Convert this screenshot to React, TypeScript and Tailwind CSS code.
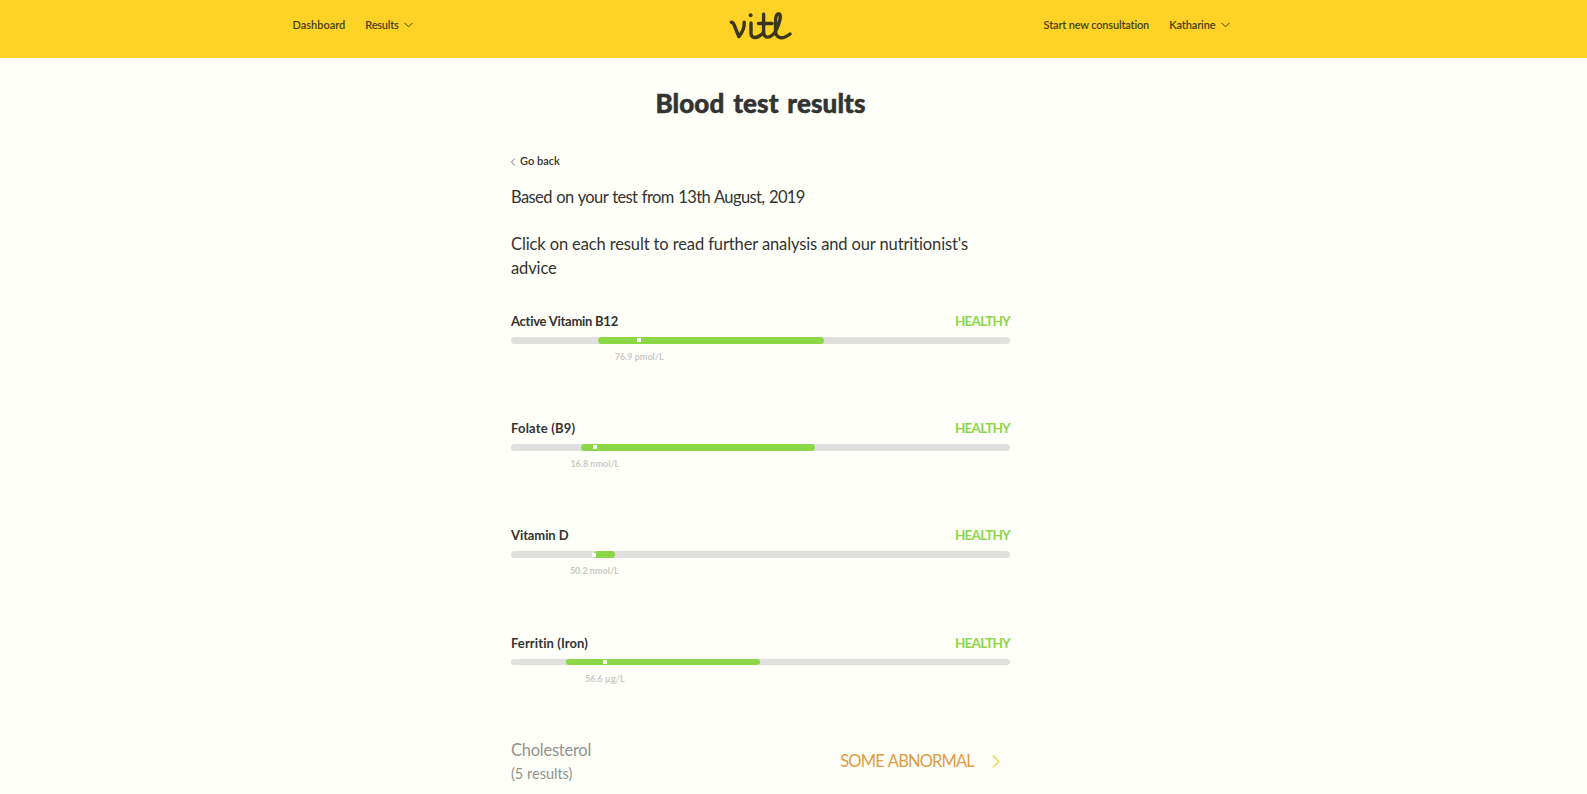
import React from 'react';

const results = [
  { name: 'Active Vitamin B12', tracking: 'tracking-[-0.26px]', status: 'HEALTHY', value: '76.9 pmol/L', from: 17.4, to: 62.7, marker: 25.7 },
  { name: 'Folate (B9)', tracking: 'tracking-[0.2px]', status: 'HEALTHY', value: '16.8 nmol/L', from: 14, to: 60.9, marker: 16.8 },
  { name: 'Vitamin D', tracking: 'tracking-[-0.1px]', status: 'HEALTHY', value: '50.2 nmol/L', from: 16.6, to: 20.8, marker: 16.7 },
  { name: 'Ferritin (Iron)', tracking: 'tracking-[0.1px]', status: 'HEALTHY', value: '56.6 µg/L', from: 11, to: 49.9, marker: 18.8 },
];

function Chevron({ className, d, box }: { className: string; d: string; box: string }) {
  return (
    <svg className={className} viewBox={box} fill="none" stroke="currentColor">
      <path d={d} />
    </svg>
  );
}

function Logo() {
  return (
    <svg className="h-[30px] w-[64px] text-[#3a371c]" viewBox="0 0 64 30" fill="none" stroke="currentColor" strokeWidth="3.4" strokeLinecap="round" strokeLinejoin="round">
      <path d="M2.3 11.3C4 11.3 4.6 12.5 5.4 14.5L9.8 25.6C12.8 22 15.6 17 15.2 11.3" />
      <path d="M22 12V22.5C22 28 28.5 28 34.5 21.5" />
      <path d="M34.6 3.3V21C34.6 28.5 42.5 27.5 47 19.5C51 12 52.8 2.8 49.5 2.8C46.8 2.8 46.5 8 46.5 12V19.5C46.5 28 54 28.8 61 23" />
      <path d="M29.5 12.5H43" />
      <circle cx="21.6" cy="4.2" r="2" fill="currentColor" stroke="none" />
    </svg>
  );
}

function ResultRow({ item }: { item: (typeof results)[number] }) {
  return (
    <div className="h-[107.2px]">
      <div className="flex h-6 justify-between pt-px leading-6">
        <span className={`text-[13px] font-bold text-[#333331] ${item.tracking}`}>{item.name}</span>
        <span className="text-[13.5px] font-bold tracking-[-0.8px] text-[#8bd749]">{item.status}</span>
      </div>
      <div className="relative mt-[5px] h-[6.7px] rounded-full bg-[#e0e0df]">
        <div
          className="absolute inset-y-0 rounded-full bg-[#8bd747]"
          style={{ left: `${item.from}%`, width: `${item.to - item.from}%` }}
        />
        <div
          className="absolute top-[1.3px] h-1 w-1 -translate-x-1/2 bg-[#fffffa]"
          style={{ left: `${item.marker}%` }}
        />
        <span
          className="absolute top-[13px] -translate-x-1/2 text-[9px] leading-[14px] font-bold whitespace-nowrap text-[#c9c9c6]"
          style={{ left: `${item.marker}%` }}
        >
          {item.value}
        </span>
      </div>
    </div>
  );
}

export default function App() {
  return (
    <div className="h-[794px] overflow-hidden bg-[#fffffa] font-['Lato',sans-serif] text-[#333331]">
      <header className="h-[58px] bg-[#fed326] pr-[66px] text-[#4a3f14]">
        <div className="mx-auto grid w-[938px] grid-cols-[1fr_64px_1fr] text-[11px] leading-[14px] font-semibold">
          <nav className="flex items-start gap-5 pt-[18px] pl-px">
            <a>Dashboard</a>
            <a className="flex items-center tracking-[-0.25px]">
              Results
              <Chevron className="ml-[5px] h-[6px] w-[9px]" box="0 0 9 6" d="M.5 .8L4.5 4.8L8.5 .8" />
            </a>
          </nav>
          <div className="pt-[11px]">
            <Logo />
          </div>
          <nav className="flex items-start justify-end gap-5 pt-[18px]">
            <a className="tracking-[-0.17px]">Start new consultation</a>
            <a className="flex items-center tracking-[-0.11px]">
              Katharine
              <Chevron className="ml-[5px] h-[6px] w-[9px]" box="0 0 9 6" d="M.5 .8L4.5 4.8L8.5 .8" />
            </a>
          </nav>
        </div>
      </header>

      <div className="pr-[66px]">
        <main className="mx-auto w-[499px]">
          <h1 className="pt-[29px] text-center text-[26px] leading-8 font-black tracking-[0.1px] [word-spacing:2.5px] [-webkit-text-stroke:0.5px_#333331]">
            Blood test results
          </h1>

          <a className="mt-[34px] flex items-center text-[11px] leading-4 font-semibold">
            <Chevron className="mt-0.5 mr-[5px] h-[8px] w-[4px] text-[#777]" box="0 0 4 8" d="M3.7 .5L.5 4L3.7 7.5" />
            Go back
          </a>

          <p className="mt-[16px] text-[16.5px] leading-6 tracking-[-0.6px] [word-spacing:0.8px]">
            Based on your test from 13th August, 2019
          </p>
          <p className="mt-[23px] text-[16.5px] leading-6 tracking-[-0.12px]">
            Click on each result to read further analysis and our nutritionist's
            <br />
            advice
          </p>

          <section className="mt-[28px]">
            {results.map((item) => (
              <ResultRow key={item.name} item={item} />
            ))}
          </section>

          <div className="flex items-center justify-between">
            <div className="text-[#92928f]">
              <div className="pt-px text-[16.5px] leading-6 tracking-[-0.25px]">Cholesterol</div>
              <div className="text-[14.5px] leading-6">(5 results)</div>
            </div>
            <div className="flex items-center pr-[10px] text-[16.5px] tracking-[-0.85px] text-[#e09b3f] [word-spacing:1.2px]">
              SOME ABNORMAL
              <Chevron className="ml-[18px] h-[13px] w-[8px] stroke-[1.5] text-[#f5d451]" box="0 0 8 13" d="M.7 .5L7 6.5L.7 12.5" />
            </div>
          </div>
        </main>
      </div>
    </div>
  );
}
